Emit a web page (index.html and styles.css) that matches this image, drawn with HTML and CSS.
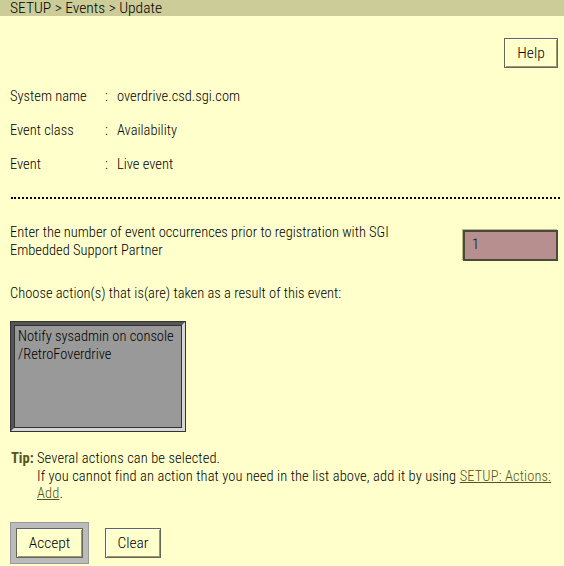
FILE: index.html
```html
<!DOCTYPE html>
<html>
<head>
<meta charset="utf-8">
<link rel="stylesheet" href="styles.css">
</head>
<body>
<div class="crumb">SETUP &gt; Events &gt; Update</div>
<div class="toolbar"><button class="btn help">Help</button></div>
<div class="info">
  <div class="row"><span class="lbl">System name</span><span class="colon">:</span><span>overdrive.csd.sgi.com</span></div>
  <div class="row"><span class="lbl">Event class</span><span class="colon">:</span><span>Availability</span></div>
  <div class="row"><span class="lbl">Event</span><span class="colon">:</span><span>Live event</span></div>
</div>
<div class="sep"></div>
<div class="occ">
  <div class="occ-text">Enter the number of event occurrences prior to registration with SGI<br>Embedded Support Partner</div>
  <div class="num">1</div>
</div>
<div class="choose">Choose action(s) that is(are) taken as a result of this event:</div>
<div class="list">
  <div class="opt">Notify sysadmin on console</div>
  <div class="opt">/RetroFoverdrive</div>
</div>
<div class="tip">
  <span class="tip-lbl">Tip:</span>
  <div class="tip-body">Several actions can be selected.<br>If you cannot find an action that you need in the list above, add it by using <a href="#" class="link">SETUP: Actions:</a><br><a href="#" class="link">Add</a>.</div>
</div>
<div class="actions">
  <div class="focus"><button class="btn">Accept</button></div>
  <button class="btn">Clear</button>
</div>
</body>
</html>
```
FILE: styles.css
```css
* { box-sizing: border-box; }
html, body { margin: 0; padding: 0; background: #ffffcc; }
body {
  font-family: "Roboto Condensed", "Liberation Sans", sans-serif;
  font-weight: 300;
  font-size: 14.5px;
  color: #000;
  width: 564px;
  height: 566px;
  overflow: hidden;
}
.crumb {
  background: #cccc99;
  height: 16px;
  line-height: 16px;
  padding-left: 10px;
  font-size: 15.5px;
}
.toolbar {
  display: flex;
  justify-content: flex-end;
  padding: 22px 6px 0 0;
}
.btn {
  font: inherit;
  font-size: 15.5px;
  background: #ffffcc;
  color: #000;
  border: 1px solid #666655;
  box-shadow: inset 1px 1px 0 #ffffff, inset -1px -1px 0 #999977;
  padding: 0;
  height: 30px;
  cursor: pointer;
}
.help { width: 54px; }
.info {
  padding: 20px 0 0 10px;
  display: flex;
  flex-direction: column;
  gap: 16px;
}
.row { display: flex; line-height: 18px; }
.lbl { width: 95px; }
.colon { width: 12px; }
.sep {
  margin: 23px 4px 0 11px;
  border-top: 2px dotted #000;
}
.occ {
  display: flex;
  justify-content: space-between;
  align-items: flex-start;
  padding: 25px 6px 0 10px;
}
.occ-text { line-height: 18px; }
.num {
  width: 95px;
  height: 31px;
  background: #b88f8f;
  border: 2px solid #4a4a38;
  box-shadow: -1px -1px 0 #b8b888;
  padding: 4px 0 0 7px;
  margin-top: 6px;
  line-height: 18px;
}
.choose { padding: 24px 0 0 10px; line-height: 18px; }
.list {
  margin: 19px 0 0 11px;
  width: 174px;
  height: 109px;
  background: #999999;
  border: 3px solid;
  border-color: #555555 #d6d6d6 #d6d6d6 #555555;
  box-shadow: 0 0 0 1px #333333, inset 1px 1px 0 #333333, inset -1px -1px 0 #333333;
  padding: 3px 4px;
  line-height: 18px;
  white-space: nowrap;
}
.tip {
  display: flex;
  padding: 19px 8px 0 11px;
  line-height: 17.5px;
}
.tip-lbl { font-weight: bold; color: #555522; width: 26px; flex: none; }
.tip-body { letter-spacing: 0.1px; }
.link { color: #555522; }
.actions {
  display: flex;
  align-items: center;
  gap: 17px;
  padding: 20px 0 0 11px;
}
.focus {
  border: 5px solid #bbbbbb;
  box-shadow: 0 0 0 1px #999999;
}
.focus .btn { width: 67px; }
.actions > .btn { width: 56px; }
```
